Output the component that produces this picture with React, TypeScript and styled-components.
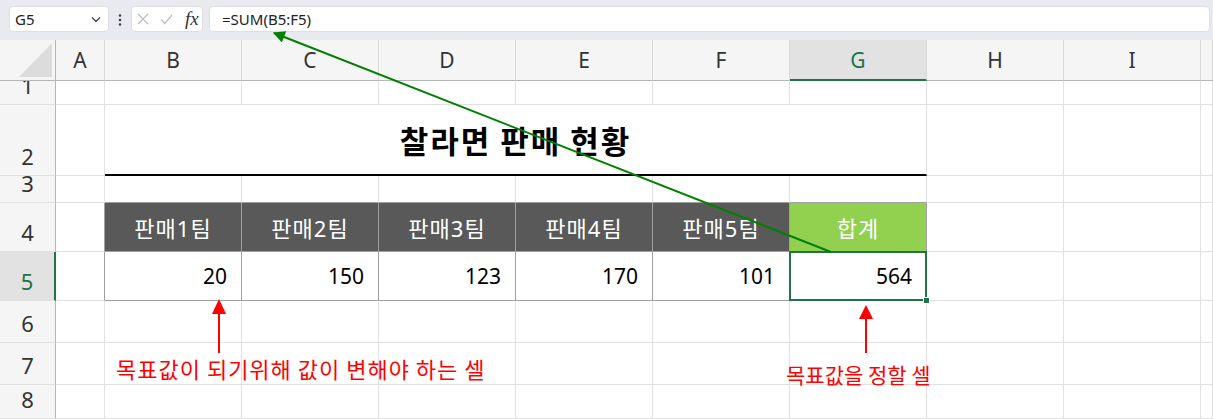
import React from "react";
import styled, { createGlobalStyle } from "styled-components";

const GlobalStyle = createGlobalStyle`
  html, body {
    margin: 0;
    padding: 0;
    background: #fff;
  }
  body {
    width: 1213px;
    height: 419px;
    overflow: hidden;
    font-family: "Noto Sans", "Noto Sans CJK KR", sans-serif;
  }
`;

const GRID_LINE = "#e1e1e1";
const HEAD_LINE = "#b6b6b6";
const TABLE_LINE = "#a0a0a0";
const EXCEL_GREEN = "#217346";

// Styles for the page
const Page = styled.div`
  position: relative;
  width: 1213px;
  height: 419px;
  overflow: hidden;
  display: flex;
  flex-direction: column;
  background: #fff;
`;

const FormulaBar = styled.div`
  height: 40px;
  flex-shrink: 0;
  box-sizing: border-box;
  padding: 6px 3px 0 9px;
  background: #e9e9f0;
  display: flex;
  align-items: flex-start;
`;

const Field = styled.div<{ $width?: number }>`
  ${(p) => (p.$width ? `width: ${p.$width}px;` : "flex: 1;")}
  height: 26px;
  box-sizing: border-box;
  background: #fff;
  border: 1px solid #dedee4;
  border-radius: 4px;
  display: flex;
  align-items: center;
  font-size: 15px;
  color: #222;
`;

const NameText = styled.span`
  flex: 1;
  padding-left: 5px;
`;

const Handle = styled.div`
  width: 22px;
  display: flex;
  justify-content: center;
  padding-top: 8px;
`;

const FxIcons = styled.div`
  display: flex;
  align-items: center;
  gap: 11px;
  padding-left: 5px;
`;

const Fx = styled.span`
  font-family: "Liberation Serif", "DejaVu Serif", serif;
  font-style: italic;
  font-size: 19px;
  color: #333;
  margin-left: 1px;
`;

const FormulaText = styled.span`
  padding-left: 12px;
`;

const Gap = styled.div`
  width: 6px;
`;

const Sheet = styled.div`
  flex: 1;
  display: grid;
  grid-template-columns: 56px 49px repeat(8, 137px) 1fr;
  grid-template-rows: 41px 24px 71px 27px 49px 49px 42px 42px 1fr;
  font-family: "Noto Sans", "Noto Sans CJK KR", sans-serif;
`;

const Corner = styled.div`
  position: relative;
  background: #f5f5f5;
  border-right: 1px solid ${HEAD_LINE};
  border-bottom: 1px solid ${HEAD_LINE};
  &::after {
    content: "";
    position: absolute;
    right: 3px;
    bottom: 3px;
    width: 33px;
    height: 34px;
    background: #dcdcdc;
    clip-path: polygon(100% 0, 100% 100%, 0 100%);
  }
`;

const ColHeader = styled.div<{ $active?: boolean }>`
  box-sizing: border-box;
  background: ${(p) => (p.$active ? "#e2e2e2" : "#f5f5f5")};
  border-right: 1px solid #dadada;
  border-bottom: ${(p) => (p.$active ? `2px solid ${EXCEL_GREEN}` : `1px solid ${HEAD_LINE}`)};
  display: flex;
  align-items: center;
  justify-content: center;
  padding-top: ${(p) => (p.$active ? "1px" : "0")};
  font-family: "Noto Sans", sans-serif;
  font-size: 21px;
  color: ${(p) => (p.$active ? EXCEL_GREEN : "#333")};
`;

const RowHeader = styled.div<{ $active?: boolean }>`
  box-sizing: border-box;
  overflow: hidden;
  background: ${(p) => (p.$active ? "#e2e2e2" : "#f5f5f5")};
  border-right: ${(p) => (p.$active ? `2px solid ${EXCEL_GREEN}` : `1px solid ${HEAD_LINE}`)};
  border-bottom: 1px solid ${GRID_LINE};
  display: flex;
  align-items: flex-end;
  justify-content: center;
  font-family: "Noto Sans", sans-serif;
  font-size: 22px;
  line-height: 1;
  padding-bottom: 8px;
  color: ${(p) => (p.$active ? EXCEL_GREEN : "#333")};
`;

const Cell = styled.div<{ $right?: string; $bottom?: string; $fill?: string }>`
  position: relative;
  box-sizing: border-box;
  background: ${(p) => p.$fill || "#fff"};
  border-right: 1px solid ${(p) => p.$right || GRID_LINE};
  border-bottom: 1px solid ${(p) => p.$bottom || GRID_LINE};
`;

const HeadCell = styled(Cell)`
  display: flex;
  align-items: center;
  justify-content: center;
  color: #fff;
  font-size: 22px;
  letter-spacing: 1px;
`;

const ValueCell = styled(Cell)`
  display: flex;
  align-items: center;
  justify-content: flex-end;
  padding-right: 14px;
  color: #000;
  font-size: 21px;
`;

const TitleCell = styled.div`
  grid-column: span 6;
  box-sizing: border-box;
  border-right: 1px solid ${GRID_LINE};
  border-bottom: 2px solid #000;
  display: flex;
  align-items: center;
  justify-content: center;
  font-family: "Noto Sans CJK KR", sans-serif;
  font-size: 31px;
  letter-spacing: 2px;
  font-weight: 700;
  color: #000;
`;

const Selection = styled.div`
  position: absolute;
  z-index: 2;
  top: -1px;
  left: -1px;
  right: -1px;
  bottom: -1px;
  border: 2px solid ${EXCEL_GREEN};
  &::after {
    content: "";
    position: absolute;
    right: -5px;
    bottom: -5px;
    width: 5px;
    height: 5px;
    background: ${EXCEL_GREEN};
    border: 1px solid #fff;
  }
`;

const Overlay = styled.svg`
  position: absolute;
  z-index: 3;
  left: 0;
  top: 0;
  pointer-events: none;
`;

const Note = styled.div<{ $x: number; $y: number; $size: number; $spacing?: number }>`
  position: absolute;
  z-index: 3;
  left: ${(p) => p.$x}px;
  top: ${(p) => p.$y}px;
  font-family: "Noto Sans CJK KR", sans-serif;
  font-size: ${(p) => p.$size}px;
  letter-spacing: ${(p) => p.$spacing || 0}px;
  line-height: 1;
  color: #ff0000;
  white-space: nowrap;
`;

const columns = ["A", "B", "C", "D", "E", "F", "G", "H", "I", ""];
const teams = ["판매1팀", "판매2팀", "판매3팀", "판매4팀", "판매5팀", "합계"];
const values = [20, 150, 123, 170, 101, 564];

const inTable = (i: number) => i >= 1 && i <= 6;

const renderRow = (r: number) => {
  const items: React.ReactNode[] = [
    <RowHeader key={`h${r}`} $active={r === 5}>
      {r}
    </RowHeader>,
  ];
  columns.forEach((c, i) => {
    const key = `${r}-${i}`;
    if (r === 2 && inTable(i)) {
      if (i === 1) items.push(<TitleCell key={key}>찰라면 판매 현황</TitleCell>);
      return;
    }
    if (r === 4 && inTable(i)) {
      items.push(
        <HeadCell
          key={key}
          $fill={i === 6 ? "#92d050" : "#595959"}
          $right={TABLE_LINE}
          $bottom={TABLE_LINE}
        >
          {teams[i - 1]}
        </HeadCell>
      );
      return;
    }
    if (r === 5 && inTable(i)) {
      items.push(
        <ValueCell key={key} $right={TABLE_LINE} $bottom={TABLE_LINE}>
          {values[i - 1]}
          {i === 6 && <Selection />}
        </ValueCell>
      );
      return;
    }
    items.push(
      <Cell
        key={key}
        $right={(r === 4 || r === 5) && i === 0 ? TABLE_LINE : undefined}
        $bottom={r === 3 && inTable(i) ? TABLE_LINE : undefined}
      />
    );
  });
  return items;
};

const App = () => {
  return (
    <Page>
      <GlobalStyle />
      <FormulaBar>
        <Field $width={100}>
          <NameText>G5</NameText>
          <svg width="16" height="16" viewBox="0 0 16 16" style={{ marginRight: 4 }}>
            <path d="M4 6.5 L8 10.5 L12 6.5" fill="none" stroke="#444" strokeWidth="1.3" />
          </svg>
        </Field>
        <Handle>
          <svg width="4" height="12" viewBox="0 0 4 12">
            <circle cx="2" cy="1.5" r="1.3" fill="#444" />
            <circle cx="2" cy="6" r="1.3" fill="#444" />
            <circle cx="2" cy="10.5" r="1.3" fill="#444" />
          </svg>
        </Handle>
        <Field $width={72}>
          <FxIcons>
            <svg width="12" height="12" viewBox="0 0 12 12">
              <path d="M1 1 L11 11 M11 1 L1 11" stroke="#bdbdbd" strokeWidth="1.2" />
            </svg>
            <svg width="13" height="11" viewBox="0 0 13 11">
              <path d="M1 5.5 L4.8 9.5 L12 1" fill="none" stroke="#bdbdbd" strokeWidth="1.2" />
            </svg>
            <Fx>fx</Fx>
          </FxIcons>
        </Field>
        <Gap />
        <Field>
          <FormulaText>=SUM(B5:F5)</FormulaText>
        </Field>
      </FormulaBar>

      <Sheet>
        <Corner />
        {columns.map((c, i) => (
          <ColHeader key={`c${i}`} $active={c === "G"}>
            {c}
          </ColHeader>
        ))}
        {[1, 2, 3, 4, 5, 6, 7, 8].map((r) => renderRow(r))}
      </Sheet>

      <Overlay width="1213" height="419" viewBox="0 0 1213 419">
        <defs>
          <marker id="greenHead" viewBox="0 0 10 10" refX="9" refY="5" markerWidth="8" markerHeight="6" orient="auto-start-reverse" markerUnits="strokeWidth">
            <path d="M0 0 L10 5 L0 10 Z" fill="#008000" />
          </marker>
        </defs>
        <line x1="831" y1="252" x2="274" y2="33" stroke="#008000" strokeWidth="2" markerEnd="url(#greenHead)" />
        <line x1="219" y1="353" x2="219" y2="312" stroke="#ff0000" strokeWidth="2" />
        <polygon points="219,299 212,314 226,314" fill="#ff0000" />
        <line x1="866" y1="353" x2="866" y2="316" stroke="#ff0000" strokeWidth="2" />
        <polygon points="866,305 859,319 873,319" fill="#ff0000" />
      </Overlay>
      <Note $x={116} $y={357} $size={22} $spacing={1}>
        목표값이 되기위해 값이 변해야 하는 셀
      </Note>
      <Note $x={786} $y={364} $size={21}>
        목표값을 정할 셀
      </Note>
    </Page>
  );
};

export default App;
